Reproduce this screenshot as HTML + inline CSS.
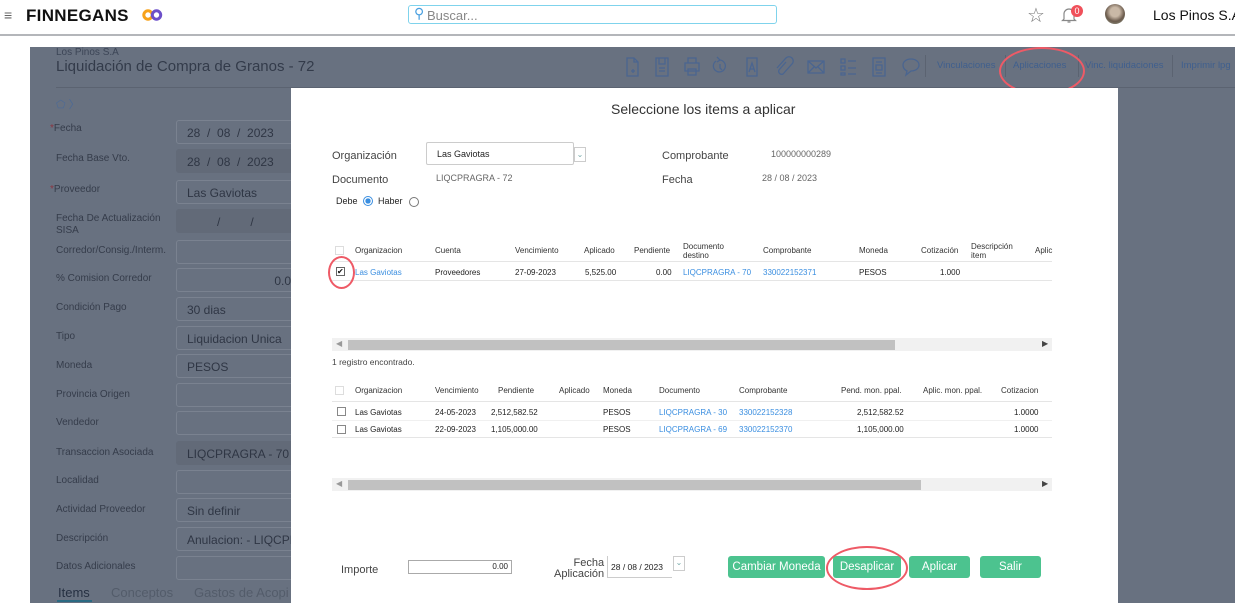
<!DOCTYPE html>
<html><head><meta charset="utf-8"><style>
*{box-sizing:border-box;margin:0;padding:0}
body{width:1235px;height:603px;overflow:hidden;background:#fff;font-family:"Liberation Sans",sans-serif;position:relative}
.a{position:absolute;white-space:nowrap}
.top{position:absolute;left:0;top:0;width:1235px;height:36px;background:#fff;border-bottom:2px solid #b4b6ba}
.panel{position:absolute;left:30px;top:47px;width:1205px;height:556px;background:#687180}
.lbl{font-size:10px;color:#353c4a}
.inp{position:absolute;left:176px;width:120px;height:24px;border:1px solid #7a8290;border-radius:3px;font-size:12px;color:#2f3644;padding:5px 10px;background:#687180;white-space:nowrap;overflow:hidden}
.inp.d{background:#626a78;border-color:#626a78}
.modal{position:absolute;left:291px;top:88px;width:827px;height:515px;background:#fff}
.h{font-size:8px;color:#333}
.c{font-size:8px;color:#222}
.lk{color:#3a8ee0}
.btn{position:absolute;top:556px;height:22px;background:#4cc38f;border-radius:3px;color:#fff;font-size:11.5px;text-align:center;line-height:22px}
.cb{position:absolute;width:9px;height:9px;border:1px solid #999;background:#fff}
.ring{position:absolute;border:2px solid #ee5a66;border-radius:50%}
.tl{font-size:9.5px;color:#3f5f8e;top:60px}
</style></head><body>
<div class="top"></div>
<div class="a" style="left:4px;top:7px;font-size:14px;color:#666">≡</div>
<div class="a" style="left:26px;top:6px;font-size:17px;font-weight:bold;color:#111;letter-spacing:0.3px">FINNEGANS</div>
<svg class="a" style="left:142px;top:9px" width="21" height="12" viewBox="0 0 21 12"><circle cx="6" cy="6" r="4.2" fill="none" stroke="#f7a21b" stroke-width="3"/><circle cx="14.5" cy="6" r="4.2" fill="none" stroke="#6c4fc9" stroke-width="3"/></svg>
<div class="a" style="left:408px;top:5px;width:369px;height:19px;border:1px solid #7fd3ec;border-radius:3px"></div>
<div class="a" style="left:414px;top:5px;font-size:14px;color:#4aa0e0">⚲</div>
<div class="a" style="left:427px;top:8px;font-size:13px;color:#888">Buscar...</div>
<div class="a" style="left:1027px;top:3px;font-size:20px;color:#777">☆</div>
<svg class="a" style="left:1061px;top:6px" width="16" height="18" viewBox="0 0 16 18"><path d="M3 13V8a5 5 0 0 1 10 0v5l1.5 1.5h-13z M6.5 16h3" fill="none" stroke="#888" stroke-width="1.2"/></svg>
<div class="a" style="left:1071px;top:5px;width:12px;height:12px;border-radius:50%;background:#f0505a;color:#fff;font-size:9px;text-align:center;line-height:12px">0</div>
<div class="a" style="left:1105px;top:4px;width:20px;height:20px;border-radius:50%;background:radial-gradient(circle at 50% 40%,#c9b8a6 0 30%,#6a5a4c 60%,#98a290)"></div>
<div class="a" style="left:1153px;top:7px;font-size:14px;color:#111">Los Pinos S.A</div>

<div class="panel"></div>
<div class="a" style="left:56px;top:47px;font-size:10px;color:#3c4556">Los Pinos S.A</div>
<div class="a" style="left:56px;top:58px;font-size:15px;color:#333b4a">Liquidación de Compra de Granos - 72</div>
<div class="a" style="left:56px;top:87px;width:1180px;height:1px;background:#5b6371"></div>
<div class="a" style="left:56px;top:96px;font-size:11px;color:#4c6a96">⬠ 〉</div>
<svg class="a" style="left:620px;top:54px" width="305" height="26" viewBox="0 0 305 26" fill="none" stroke="#4a6590" stroke-width="1.3">
<path d="M7 4h7l4 4v14H7z M14 4v4h4 M11 17h4 M13 15v4"/>
<path d="M36 4h12v18H36z M39 4v6h6V4 M39 14h6 M39 17h6"/>
<path d="M65 9h14v8H65z M68 4h8v5h-8z M68 15h8v6h-8z"/>
<path d="M96 7a6 6 0 1 0 4 -1 M97 3l3 3-3 2 M100 10v4l2 2"/>
<path d="M127 4h10v18h-10z M129 18l3-9 3 9 M130 15h4"/>
<path d="M166 8l-7 8a3 3 0 0 0 4 4l9-10a4 4 0 0 0-6-6l-9 10"/>
<path d="M188 7h16v12h-16z M188 7l8 7 8-7 M188 19l6-6 M204 19l-6-6"/>
<path d="M221 5h4v4h-4z M221 12h4v4h-4z M221 19h4v2h-4z M228 7h8 M228 14h8 M228 20h8"/>
<path d="M253 4h12v18h-12z M256 8h6 M256 11h6v5h-6z M256 19h6"/>
<path d="M291 5c5 0 8 3 8 6s-3 6-8 6l-5 4 1-4c-2-1-4-3-4-6 0-3 3-6 8-6z"/>
</svg>
<div class="a" style="left:925px;top:55px;width:1px;height:22px;background:#5b6371"></div>
<div class="a tl" style="left:937px">Vinculaciones</div>
<div class="a" style="left:1005px;top:55px;width:1px;height:22px;background:#5b6371"></div>
<div class="a tl" style="left:1013px">Aplicaciones</div>
<div class="a" style="left:1078px;top:55px;width:1px;height:22px;background:#5b6371"></div>
<div class="a tl" style="left:1085px">Vinc. liquidaciones</div>
<div class="a" style="left:1172px;top:55px;width:1px;height:22px;background:#5b6371"></div>
<div class="a tl" style="left:1181px">Imprimir lpg</div>
<div class="ring" style="left:999px;top:47px;width:86px;height:48px"></div>

<div class="a lbl" style="left:50px;top:123px"><span style="color:#8a3540">*</span>Fecha</div>
<div class="inp" style="top:120px">28 &nbsp;/ &nbsp;08 &nbsp;/ &nbsp;2023</div>
<div class="a lbl" style="left:56px;top:153px">Fecha Base Vto.</div>
<div class="inp d" style="top:149px">28 &nbsp;/ &nbsp;08 &nbsp;/ &nbsp;2023</div>
<div class="a lbl" style="left:50px;top:184px"><span style="color:#8a3540">*</span>Proveedor</div>
<div class="inp" style="top:180px">Las Gaviotas</div>
<div class="a lbl" style="left:56px;top:213px;line-height:12px">Fecha De Actualización<br>SISA</div>
<div class="inp d" style="top:209px">&nbsp;&nbsp;&nbsp;&nbsp;&nbsp;&nbsp;&nbsp;&nbsp;&nbsp;/ &nbsp;&nbsp;&nbsp;&nbsp;&nbsp;&nbsp;&nbsp;&nbsp;/</div>
<div class="a lbl" style="left:56px;top:245px">Corredor/Consig./Interm.</div>
<div class="inp" style="top:240px"></div>
<div class="a lbl" style="left:56px;top:273px">% Comision Corredor</div>
<div class="inp" style="top:268px;text-align:right;padding-right:4px">0.0</div>
<div class="a lbl" style="left:56px;top:302px">Condición Pago</div>
<div class="inp" style="top:297px">30 dias</div>
<div class="a lbl" style="left:56px;top:331px">Tipo</div>
<div class="inp" style="top:326px">Liquidacion Unica</div>
<div class="a lbl" style="left:56px;top:360px">Moneda</div>
<div class="inp" style="top:354px">PESOS</div>
<div class="a lbl" style="left:56px;top:389px">Provincia Origen</div>
<div class="inp" style="top:383px"></div>
<div class="a lbl" style="left:56px;top:417px">Vendedor</div>
<div class="inp" style="top:411px"></div>
<div class="a lbl" style="left:56px;top:447px">Transaccion Asociada</div>
<div class="inp d" style="top:441px">LIQCPRAGRA - 70</div>
<div class="a lbl" style="left:56px;top:475px">Localidad</div>
<div class="inp" style="top:470px"></div>
<div class="a lbl" style="left:56px;top:504px">Actividad Proveedor</div>
<div class="inp" style="top:498px">Sin definir</div>
<div class="a lbl" style="left:56px;top:533px">Descripción</div>
<div class="inp" style="top:527px">Anulacion: - LIQCPRAGRA</div>
<div class="a lbl" style="left:56px;top:561px">Datos Adicionales</div>
<div class="inp" style="top:556px"></div>
<div class="a" style="left:58px;top:585px;font-size:13px;color:#263042">Items</div>
<div class="a" style="left:57px;top:600px;width:35px;height:2px;background:#2b6a82"></div>
<div class="a" style="left:111px;top:585px;font-size:13px;color:#535c6a">Conceptos</div>
<div class="a" style="left:194px;top:585px;font-size:13px;color:#535c6a">Gastos de Acopi</div>

<div class="modal"></div>
<div class="a" style="left:611px;top:101px;font-size:14px;color:#333">Seleccione los items a aplicar</div>
<div class="a" style="left:332px;top:150px;font-size:11px;color:#444">Organización</div>
<div class="a" style="left:426px;top:142px;width:148px;height:23px;border:1px solid #ccc;border-radius:2px;font-size:9px;color:#222;padding:6px 10px">Las Gaviotas</div>
<div class="a" style="left:574px;top:147px;width:12px;height:15px;border:1px solid #ccc;font-size:8px;color:#7aa;text-align:center;line-height:13px">⌄</div>
<div class="a" style="left:332px;top:174px;font-size:11px;color:#444">Documento</div>
<div class="a" style="left:436px;top:173px;font-size:9px;color:#666">LIQCPRAGRA - 72</div>
<div class="a" style="left:662px;top:150px;font-size:11px;color:#444">Comprobante</div>
<div class="a" style="left:771px;top:149px;font-size:9px;color:#666">100000000289</div>
<div class="a" style="left:662px;top:174px;font-size:11px;color:#444">Fecha</div>
<div class="a" style="left:762px;top:173px;font-size:9px;color:#666">28 / 08 / 2023</div>
<div class="a" style="left:336px;top:196px;font-size:9px;color:#222">Debe</div>
<div class="a" style="left:363px;top:196px;width:10px;height:10px;border-radius:50%;border:1px solid #3a8ee0;background:radial-gradient(#3a8ee0 0 45%,#fff 50%)"></div>
<div class="a" style="left:378px;top:196px;font-size:9px;color:#222">Haber</div>
<div class="a" style="left:409px;top:197px;width:10px;height:10px;border-radius:50%;border:1px solid #777"></div>

<div class="cb" style="left:335px;top:246px;border-color:#ddd"></div>
<div class="a h" style="left:355px;top:246px">Organizacion</div>
<div class="a h" style="left:435px;top:246px">Cuenta</div>
<div class="a h" style="left:515px;top:246px">Vencimiento</div>
<div class="a h" style="left:584px;top:246px">Aplicado</div>
<div class="a h" style="left:634px;top:246px">Pendiente</div>
<div class="a h" style="left:683px;top:242px;line-height:9px">Documento<br>destino</div>
<div class="a h" style="left:763px;top:246px">Comprobante</div>
<div class="a h" style="left:859px;top:246px">Moneda</div>
<div class="a h" style="left:921px;top:246px">Cotización</div>
<div class="a h" style="left:971px;top:242px;line-height:9px">Descripción<br>item</div>
<div class="a h" style="left:1035px;top:246px">Aplic</div>
<div class="a" style="left:332px;top:261px;width:720px;height:1px;background:#e5e5e5"></div>
<div class="a" style="left:332px;top:280px;width:720px;height:1px;background:#e5e5e5"></div>
<div class="cb" style="left:336px;top:267px;border-color:#666;font-size:8px;line-height:7px;color:#111">✔</div>
<div class="ring" style="left:328px;top:256px;width:27px;height:33px"></div>
<div class="a c lk" style="left:355px;top:268px">Las Gaviotas</div>
<div class="a c" style="left:435px;top:268px">Proveedores</div>
<div class="a c" style="left:515px;top:268px">27-09-2023</div>
<div class="a c" style="left:585px;top:268px">5,525.00</div>
<div class="a c" style="left:656px;top:268px">0.00</div>
<div class="a c lk" style="left:683px;top:268px">LIQCPRAGRA - 70</div>
<div class="a c lk" style="left:763px;top:268px">330022152371</div>
<div class="a c" style="left:859px;top:268px">PESOS</div>
<div class="a c" style="left:940px;top:268px">1.000</div>
<div class="a" style="left:332px;top:338px;width:720px;height:13px;background:#f1f1f1"></div>
<div class="a" style="left:348px;top:340px;width:547px;height:10px;background:#c1c1c1"></div>
<div class="a" style="left:336px;top:339px;font-size:8px;color:#999">◀</div>
<div class="a" style="left:1042px;top:339px;font-size:8px;color:#444">▶</div>
<div class="a" style="left:332px;top:357px;font-size:8.5px;color:#444">1 registro encontrado.</div>

<div class="cb" style="left:335px;top:386px;border-color:#ddd"></div>
<div class="a h" style="left:355px;top:386px">Organizacion</div>
<div class="a h" style="left:435px;top:386px">Vencimiento</div>
<div class="a h" style="left:498px;top:386px">Pendiente</div>
<div class="a h" style="left:559px;top:386px">Aplicado</div>
<div class="a h" style="left:603px;top:386px">Moneda</div>
<div class="a h" style="left:659px;top:386px">Documento</div>
<div class="a h" style="left:739px;top:386px">Comprobante</div>
<div class="a h" style="left:841px;top:386px">Pend. mon. ppal.</div>
<div class="a h" style="left:923px;top:386px">Aplic. mon. ppal.</div>
<div class="a h" style="left:1001px;top:386px">Cotizacion</div>
<div class="a" style="left:332px;top:401px;width:720px;height:1px;background:#e5e5e5"></div>
<div class="a" style="left:332px;top:420px;width:720px;height:1px;background:#f0f0f0"></div>
<div class="a" style="left:332px;top:437px;width:720px;height:1px;background:#e5e5e5"></div>
<div class="cb" style="left:337px;top:407px;border-color:#888"></div>
<div class="a c" style="left:355px;top:408px">Las Gaviotas</div>
<div class="a c" style="left:435px;top:408px">24-05-2023</div>
<div class="a c" style="left:491px;top:408px">2,512,582.52</div>
<div class="a c" style="left:603px;top:408px">PESOS</div>
<div class="a c lk" style="left:659px;top:408px">LIQCPRAGRA - 30</div>
<div class="a c lk" style="left:739px;top:408px">330022152328</div>
<div class="a c" style="left:857px;top:408px">2,512,582.52</div>
<div class="a c" style="left:1014px;top:408px">1.0000</div>
<div class="cb" style="left:337px;top:425px;border-color:#888"></div>
<div class="a c" style="left:355px;top:425px">Las Gaviotas</div>
<div class="a c" style="left:435px;top:425px">22-09-2023</div>
<div class="a c" style="left:491px;top:425px">1,105,000.00</div>
<div class="a c" style="left:603px;top:425px">PESOS</div>
<div class="a c lk" style="left:659px;top:425px">LIQCPRAGRA - 69</div>
<div class="a c lk" style="left:739px;top:425px">330022152370</div>
<div class="a c" style="left:857px;top:425px">1,105,000.00</div>
<div class="a c" style="left:1014px;top:425px">1.0000</div>
<div class="a" style="left:332px;top:478px;width:720px;height:13px;background:#f1f1f1"></div>
<div class="a" style="left:348px;top:480px;width:573px;height:10px;background:#c1c1c1"></div>
<div class="a" style="left:336px;top:479px;font-size:8px;color:#999">◀</div>
<div class="a" style="left:1042px;top:479px;font-size:8px;color:#444">▶</div>

<div class="a" style="left:341px;top:564px;font-size:11px;color:#444">Importe</div>
<div class="a" style="left:408px;top:560px;width:104px;height:14px;border:1px solid #aaa;font-size:8px;color:#222;text-align:right;padding:1px 3px">0.00</div>
<div class="a" style="left:554px;top:558px;font-size:11px;color:#444;text-align:right;line-height:11px">&nbsp;&nbsp;&nbsp;&nbsp;&nbsp;Fecha<br>Aplicación</div>
<div class="a" style="left:607px;top:556px;width:65px;height:22px;border-left:1px solid #ccc;border-bottom:1px solid #ccc;font-size:8.5px;color:#222;padding:6px 3px">28 / 08 / 2023</div>
<div class="a" style="left:673px;top:556px;width:12px;height:15px;border:1px solid #ccc;font-size:8px;color:#7aa;text-align:center;line-height:12px">⌄</div>
<div class="btn" style="left:728px;width:97px">Cambiar Moneda</div>
<div class="btn" style="left:833px;width:68px">Desaplicar</div>
<div class="btn" style="left:909px;width:61px">Aplicar</div>
<div class="btn" style="left:980px;width:61px">Salir</div>
<div class="ring" style="left:826px;top:546px;width:82px;height:44px"></div>
</body></html>
